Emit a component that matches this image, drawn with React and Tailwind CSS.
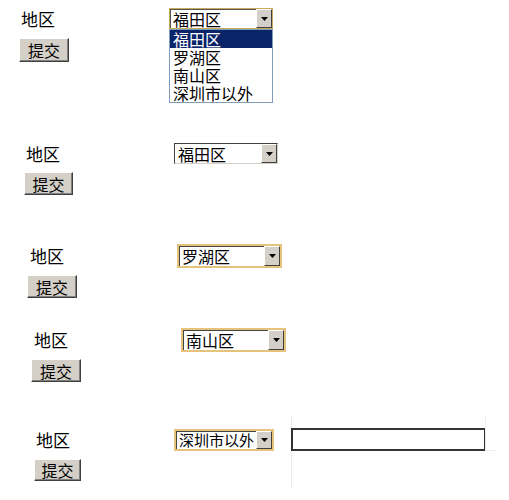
const font = { fontFamily: '"Noto Sans CJK SC", "Noto Sans", sans-serif' };

const options = ['福田区', '罗湖区', '南山区', '深圳市以外'];

function Arrow() {
  return (
    <div className="w-[16px] h-full bg-[#d4d0c8] border border-t-white border-l-white border-r-[#404040] border-b-[#404040] flex items-center justify-center shrink-0">
      <svg width="7" height="4" viewBox="0 0 7 4">
        <path d="M0 0h7L3.5 4z" fill="#000" />
      </svg>
    </div>
  );
}

function FakeSelect({ value, outer, w, h, size = 'text-[16px]' }) {
  return (
    <div className={`${outer} ${w} ${h} bg-white flex shrink-0`}>
      <div className={`flex-1 min-w-0 flex items-center pl-[3px] ${size} leading-[18px] text-black whitespace-nowrap`}>
        {value}
      </div>
      <Arrow />
    </div>
  );
}

function Button({ className }) {
  return (
    <button
      className={`${className} bg-[#d4d0c8] border border-t-white border-l-white border-r-[#404040] border-b-[#404040] shadow-[inset_-1px_-1px_0_#808080] text-[16px] leading-[18px] text-black flex items-center justify-center`}
    >
      提交
    </button>
  );
}

export default function App() {
  return (
    <div className="w-[509px] h-[500px] bg-white overflow-hidden text-black" style={font}>
      {/* block 1: open list */}
      <div className="pt-[8px]">
        <div className="flex items-center h-[21px]">
          <span className="pl-[21px] w-[169px] text-[17px] leading-[20px]">地区</span>
          <div className="relative">
            <FakeSelect value="福田区" outer="border border-[#c9a95c] shadow-[inset_1px_1px_0_#555]" w="w-[104px]" h="h-[21px]" />
            <div className="absolute left-0 top-[21px] w-[104px] bg-white border border-[#7f9db9] z-10">
              {options.map((o, i) => (
                <div
                  key={o}
                  className={`h-[18px] flex items-center pl-[3px] text-[16px] leading-[18px] ${i === 0 ? 'bg-[#0a246a] text-white' : 'text-black'}`}
                >
                  {o}
                </div>
              ))}
            </div>
          </div>
        </div>
        <Button className="mt-[9px] ml-[19px] w-[50px] h-[24px]" />
      </div>

      {/* block 2 */}
      <div className="mt-[81px]">
        <div className="flex items-center h-[21px]">
          <span className="pl-[26px] w-[174px] text-[17px] leading-[20px]">地区</span>
          <FakeSelect value="福田区" outer="border border-t-[#404040] border-l-[#404040] border-r-[#d4d0c8] border-b-[#d4d0c8]" w="w-[104px]" h="h-[21px]" />
        </div>
        <Button className="mt-[8px] ml-[24px] w-[49px] h-[23px]" />
      </div>

      {/* block 3 */}
      <div className="mt-[49px]">
        <div className="flex items-center h-[24px]">
          <span className="pl-[30px] w-[177px] text-[17px] leading-[20px]">地区</span>
          <FakeSelect value="罗湖区" outer="border-2 border-[#e7c27a] shadow-[inset_1px_1px_0_#444]" w="w-[105px]" h="h-[24px]" />
        </div>
        <Button className="mt-[7px] ml-[27px] w-[50px] h-[23px]" />
      </div>

      {/* block 4 */}
      <div className="mt-[30px]">
        <div className="flex items-center h-[24px]">
          <span className="pl-[34px] w-[181px] text-[17px] leading-[20px]">地区</span>
          <FakeSelect value="南山区" outer="border-2 border-[#e7c27a] shadow-[inset_1px_1px_0_#444]" w="w-[105px]" h="h-[24px]" />
        </div>
        <Button className="mt-[7px] ml-[31px] w-[50px] h-[23px]" />
      </div>

      {/* block 5 with text input */}
      <div className="mt-[34px] flex items-start">
        <div className="w-[291px] pt-[13px]">
          <div className="flex items-center h-[22px]">
            <span className="pl-[36px] w-[174px] text-[17px] leading-[20px]">地区</span>
            <FakeSelect value="深圳市以外" size="text-[15px]" outer="border-2 border-[#e7c27a] shadow-[inset_1px_1px_0_#444]" w="w-[100px]" h="h-[22px]" />
          </div>
          <Button className="mt-[8px] ml-[34px] w-[47px] h-[22px]" />
        </div>
        <div className="w-[194px] h-[72px] border-l border-[#ececec] pt-[12px]">
          <input className="block w-[195px] -ml-px h-[23px] border-2 border-[#333] bg-white outline-none" />
        </div>
        <div className="w-[10px] h-[35px] border-l border-b border-[#ececec]" />
      </div>
    </div>
  );
}
